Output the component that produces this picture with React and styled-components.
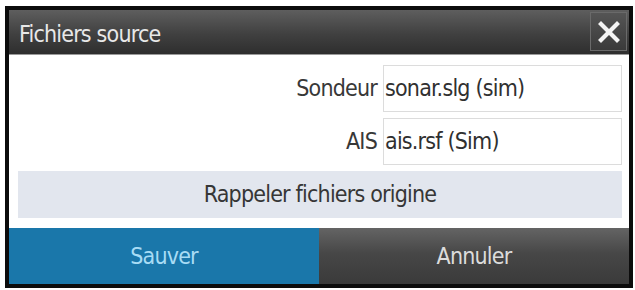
import React from 'react'
import styled, { createGlobalStyle } from 'styled-components'

const GlobalStyle = createGlobalStyle`
    html, body {
        margin: 0;
        padding: 0;
        background: #ffffff;
    }
    body {
        font-family: "DejaVu Sans Condensed", "DejaVu Sans", sans-serif;
        font-stretch: condensed;
        letter-spacing: -0.8px;
    }
`;

const Page = styled.div`
    width: 635px;
    height: 290px;
    padding: 6px 2px 0 5px;
    box-sizing: border-box;
`;

const Dialog = styled.div`
    width: 628px;
    height: 282px;
    box-sizing: border-box;
    border: 4px solid #0c0c0c;
    display: flex;
    flex-direction: column;
    background: #ffffff;
`;

const TitleBar = styled.div`
    height: 44px;
    display: flex;
    align-items: center;
    justify-content: space-between;
    padding: 0 2px 0 10px;
    background: linear-gradient(#5e5e5e, #404040 55%, #2e2e2e);
    border-bottom: 1px solid #9a9a9a;
`;

const Title = styled.h2`
    margin: 0;
    padding-top: 5px;
    font-weight: normal;
    font-size: 23px;
    color: #e8e8e8;
`;

const CloseButton = styled.button`
    width: 37px;
    height: 39px;
    padding: 0;
    display: flex;
    align-items: center;
    justify-content: center;
    background: linear-gradient(#555555, #3a3a3a);
    border: 1px solid #6a6a6a;
    cursor: pointer;
`;

const Body = styled.div`
    flex: 1;
    padding: 10px 7px 10px 9px;
    display: flex;
    flex-direction: column;
    gap: 6px;
`;

const Field = styled.div`
    display: grid;
    grid-template-columns: 1fr 239px;
    column-gap: 6px;
    height: 47px;
`;

const Label = styled.span`
    align-self: center;
    text-align: right;
    font-size: 23px;
    color: #383838;
`;

const Value = styled.div`
    display: flex;
    align-items: center;
    padding-left: 1px;
    border: 1px solid #dcdcdc;
    font-size: 23px;
    color: #303030;
`;

const WideButton = styled.button`
    height: 47px;
    border: none;
    background: #e2e6ee;
    font-family: inherit;
    font-stretch: inherit;
    letter-spacing: inherit;
    font-size: 23px;
    color: #363636;
    cursor: pointer;
`;

const Footer = styled.div`
    height: 57px;
    display: flex;
`;

const FooterButton = styled.button`
    flex: 1;
    border: none;
    font-family: inherit;
    font-stretch: inherit;
    letter-spacing: inherit;
    font-size: 23px;
    cursor: pointer;
    color: ${p => p.$primary ? '#a8dcf5' : '#dcdcdc'};
    background: ${p => p.$primary
        ? '#1a77aa'
        : 'linear-gradient(#646464, #474747 45%, #3a3a3a)'};
`;

const fields = [
    { label: 'Sondeur', value: 'sonar.slg (sim)' },
    { label: 'AIS', value: 'ais.rsf (Sim)' },
]

const App = () => {
    return (
        <Page>
            <GlobalStyle />
            <Dialog>
                <TitleBar>
                    <Title>Fichiers source</Title>
                    <CloseButton aria-label="Fermer">
                        <svg width="22" height="22" viewBox="0 0 22 22">
                            <path d="M3 3 L19 19 M19 3 L3 19" stroke="#f4f4f4" strokeWidth="4.2" strokeLinecap="square" />
                        </svg>
                    </CloseButton>
                </TitleBar>
                <Body>
                    {fields.map(f => (
                        <Field key={f.label}>
                            <Label>{f.label}</Label>
                            <Value>{f.value}</Value>
                        </Field>
                    ))}
                    <WideButton>Rappeler fichiers origine</WideButton>
                </Body>
                <Footer>
                    <FooterButton $primary>Sauver</FooterButton>
                    <FooterButton>Annuler</FooterButton>
                </Footer>
            </Dialog>
        </Page>
    )
}

export default App
